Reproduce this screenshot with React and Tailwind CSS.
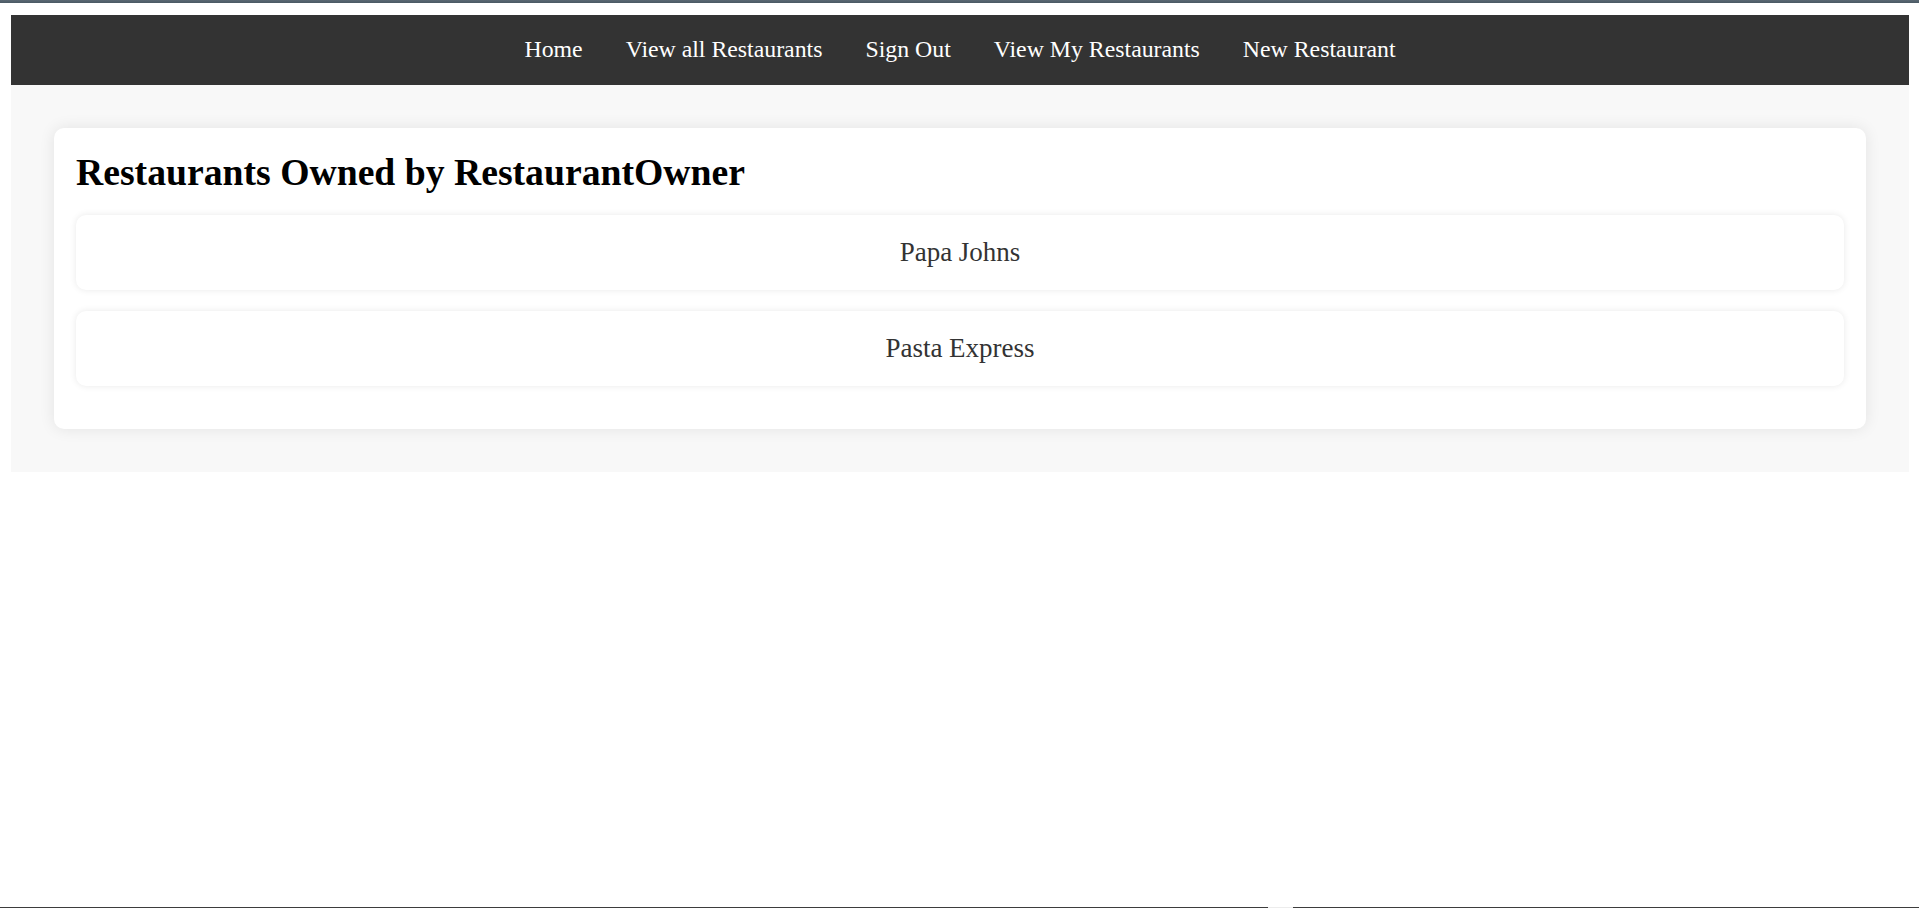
const links = ["Home", "View all Restaurants", "Sign Out", "View My Restaurants", "New Restaurant"];
const restaurants = ["Papa Johns", "Pasta Express"];

export default function App() {
  return (
    <div className="h-[908px] flex flex-col bg-white font-['Liberation_Serif','Times_New_Roman',serif]">
      {/* window top strip */}
      <div className="h-[3px] bg-gradient-to-b from-[#5a6873] to-[#4a5964]" />

      <div className="flex-1 pt-[12px] pl-[11px] pr-[10px]">
        {/* Navbar */}
        <nav className="h-[70px] pb-[2px] bg-[#333333] flex items-center justify-center">
          {links.map((l) => (
            <a key={l} href="#" className="px-[21.5px] text-[23.8px] leading-[28px] text-white">
              {l}
            </a>
          ))}
        </nav>

        {/* Content */}
        <main className="bg-[#f8f8f8] p-[43px]">
          <div className="bg-white rounded-[10px] shadow-[0_0_16px_rgba(0,0,0,0.09)] px-[22px] pt-[23px] pb-[43px]">
            <h1 className="text-[37.7px] leading-[43px] font-bold text-black mb-[21px]">
              Restaurants Owned by RestaurantOwner
            </h1>
            <div className="flex flex-col gap-[21px]">
              {restaurants.map((r) => (
                <div
                  key={r}
                  className="rounded-[10px] bg-white shadow-[0_0_7px_rgba(0,0,0,0.09)] py-[22px] text-center text-[27px] leading-[31px] text-[#333333]"
                >
                  {r}
                </div>
              ))}
            </div>
          </div>
        </main>
      </div>

      {/* bottom strip */}
      <div className="h-[1px] flex">
        <div className="w-[1268px] bg-[#3d3d3d]" />
        <div className="w-[25px] bg-[#ececec]" />
        <div className="flex-1 bg-[#3d3d3d]" />
      </div>
    </div>
  );
}
